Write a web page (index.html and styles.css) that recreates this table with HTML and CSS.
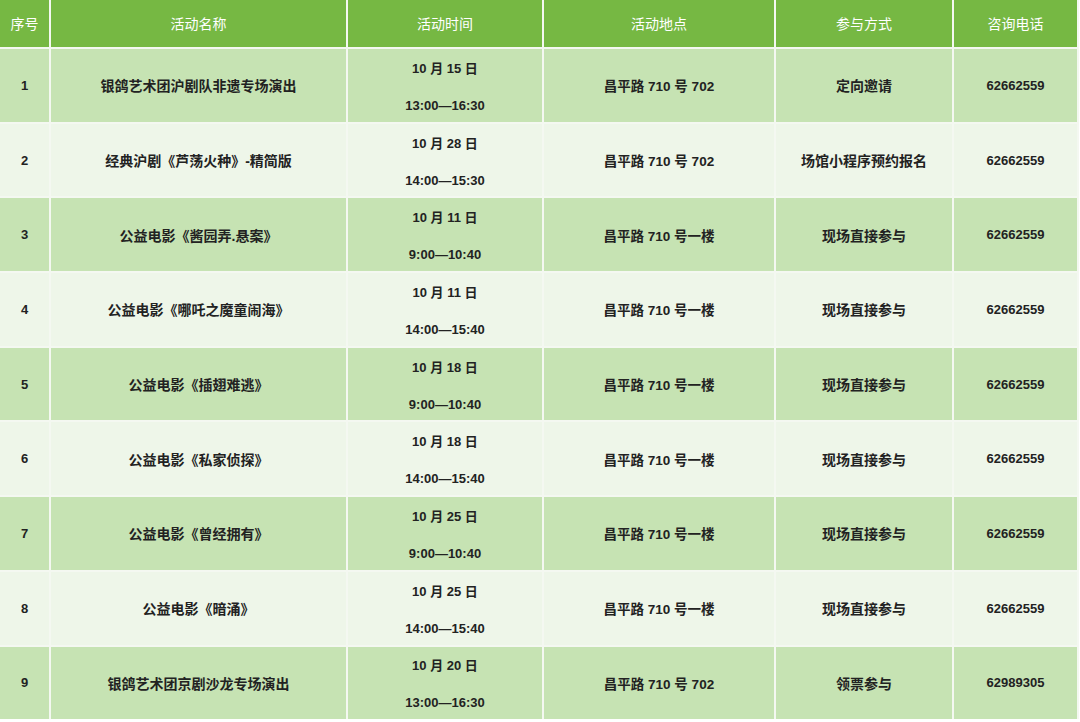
FILE: index.html
```html
<!DOCTYPE html>
<html lang="zh">
<head>
<meta charset="utf-8">
<link rel="stylesheet" href="styles.css">
</head>
<body>
<div class="table">
  <div class="cell head">序号</div>
  <div class="cell head">活动名称</div>
  <div class="cell head">活动时间</div>
  <div class="cell head">活动地点</div>
  <div class="cell head">参与方式</div>
  <div class="cell head">咨询电话</div>

  <div class="cell odd num">1</div>
  <div class="cell odd">银鸽艺术团沪剧队非遗专场演出</div>
  <div class="cell odd time"><span>10 月 15 日</span><span>13:00—16:30</span></div>
  <div class="cell odd loc">昌平路 710 号 702</div>
  <div class="cell odd">定向邀请</div>
  <div class="cell odd num">62662559</div>

  <div class="cell even num">2</div>
  <div class="cell even">经典沪剧《芦荡火种》-精简版</div>
  <div class="cell even time"><span>10 月 28 日</span><span>14:00—15:30</span></div>
  <div class="cell even loc">昌平路 710 号 702</div>
  <div class="cell even">场馆小程序预约报名</div>
  <div class="cell even num">62662559</div>

  <div class="cell odd num">3</div>
  <div class="cell odd">公益电影《酱园弄.悬案》</div>
  <div class="cell odd time"><span>10 月 11 日</span><span>9:00—10:40</span></div>
  <div class="cell odd loc">昌平路 710 号一楼</div>
  <div class="cell odd">现场直接参与</div>
  <div class="cell odd num">62662559</div>

  <div class="cell even num">4</div>
  <div class="cell even">公益电影《哪吒之魔童闹海》</div>
  <div class="cell even time"><span>10 月 11 日</span><span>14:00—15:40</span></div>
  <div class="cell even loc">昌平路 710 号一楼</div>
  <div class="cell even">现场直接参与</div>
  <div class="cell even num">62662559</div>

  <div class="cell odd num">5</div>
  <div class="cell odd">公益电影《插翅难逃》</div>
  <div class="cell odd time"><span>10 月 18 日</span><span>9:00—10:40</span></div>
  <div class="cell odd loc">昌平路 710 号一楼</div>
  <div class="cell odd">现场直接参与</div>
  <div class="cell odd num">62662559</div>

  <div class="cell even num">6</div>
  <div class="cell even">公益电影《私家侦探》</div>
  <div class="cell even time"><span>10 月 18 日</span><span>14:00—15:40</span></div>
  <div class="cell even loc">昌平路 710 号一楼</div>
  <div class="cell even">现场直接参与</div>
  <div class="cell even num">62662559</div>

  <div class="cell odd num">7</div>
  <div class="cell odd">公益电影《曾经拥有》</div>
  <div class="cell odd time"><span>10 月 25 日</span><span>9:00—10:40</span></div>
  <div class="cell odd loc">昌平路 710 号一楼</div>
  <div class="cell odd">现场直接参与</div>
  <div class="cell odd num">62662559</div>

  <div class="cell even num">8</div>
  <div class="cell even">公益电影《暗涌》</div>
  <div class="cell even time"><span>10 月 25 日</span><span>14:00—15:40</span></div>
  <div class="cell even loc">昌平路 710 号一楼</div>
  <div class="cell even">现场直接参与</div>
  <div class="cell even num">62662559</div>

  <div class="cell odd num">9</div>
  <div class="cell odd">银鸽艺术团京剧沙龙专场演出</div>
  <div class="cell odd time"><span>10 月 20 日</span><span>13:00—16:30</span></div>
  <div class="cell odd loc">昌平路 710 号 702</div>
  <div class="cell odd">领票参与</div>
  <div class="cell odd num">62989305</div>
</div>
</body>
</html>
```

FILE: styles.css
```css
html, body {
  margin: 0;
  padding: 0;
  background: #ffffff;
}

.table {
  display: grid;
  grid-template-columns: 49px 295px 194px 230px 176px 123px;
  grid-template-rows: 47px repeat(9, 72.7px);
  gap: 2px;
  width: 1079px;
  background: #f4f8f1;
  font-family: "Liberation Sans", "Noto Sans CJK SC", sans-serif;
  color: #222222;
}

.cell {
  display: flex;
  align-items: center;
  justify-content: center;
  text-align: center;
  font-weight: 700;
  font-size: 14px;
}

.head {
  background: #76b843;
  color: #ffffff;
  font-weight: 400;
  font-size: 14px;
  font-family: "Noto Sans CJK SC", sans-serif;
  padding-bottom: 2px;
}

.odd {
  background: #c6e3b3;
}

.even {
  background: #eef6e9;
}

.num {
  font-size: 13px;
}

.loc {
  font-size: 13.5px;
}

.time {
  flex-direction: column;
  gap: 21px;
  font-size: 13px;
}
```
